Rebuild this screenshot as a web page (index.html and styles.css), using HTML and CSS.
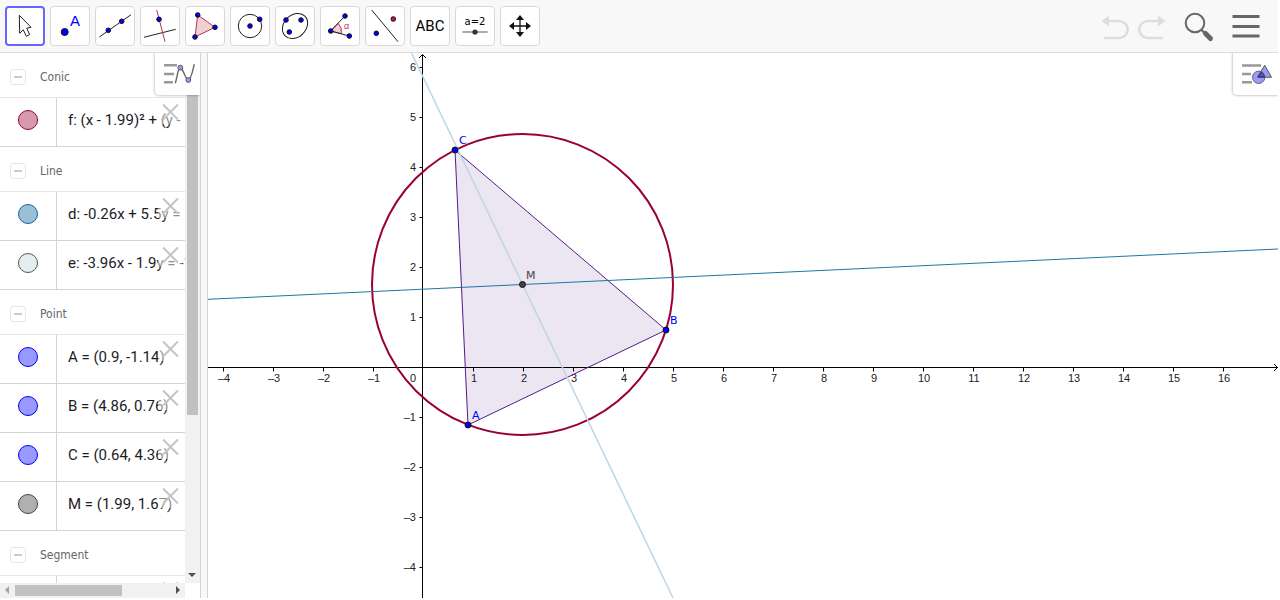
FILE: index.html
```
<!DOCTYPE html>
<html lang="en">
<head>
    <meta charset="UTF-8">
    <title>Geometry</title>
    <link rel="stylesheet" href="styles.css">
</head>
<body>
    <header class="toolbar">
        <div class="tools">
            <button class="tool selected" aria-label="Move">
                <svg viewBox="0 0 32 32"><path d="M10.3 5.3 L10.7 23.3 L14.3 19.8 L17.3 26.3 L20.7 24.6 L17.7 18.2 L22 17.3 Z" fill="#fff" stroke="#222"/></svg>
            </button>
            <button class="tool" aria-label="Point">
                <svg viewBox="0 0 32 32"><circle class="pt" cx="10.7" cy="22" r="3.5"/><text class="blue" x="16" y="16" font-size="15">A</text></svg>
            </button>
            <button class="tool" aria-label="Line">
                <svg viewBox="0 0 32 32"><path class="ln" d="M0.3 27 L32 4.7"/><circle class="pt" cx="9.3" cy="20.3" r="2.3"/><circle class="pt" cx="22.7" cy="11.3" r="2.3"/></svg>
            </button>
            <button class="tool" aria-label="Perpendicular line">
                <svg viewBox="0 0 32 32"><path class="ln" d="M0 27.3 L31.7 19.3"/><path class="red" d="M12.7 0 L21 31.7"/><circle class="pt" cx="15" cy="9.3" r="2.3"/></svg>
            </button>
            <button class="tool" aria-label="Polygon">
                <svg viewBox="0 0 32 32"><path class="red fill" d="M8.7 5 L26 17.3 L6 27 Z"/><circle class="pt" cx="8.7" cy="5" r="2.3"/><circle class="pt" cx="26" cy="17.3" r="2.3"/><circle class="pt" cx="6" cy="27" r="2.3"/></svg>
            </button>
            <button class="tool" aria-label="Circle">
                <svg viewBox="0 0 32 32"><circle class="ln" cx="16" cy="16" r="11.7"/><circle class="pt" cx="16" cy="16" r="2.3"/><circle class="pt" cx="25.7" cy="9.3" r="2.3"/></svg>
            </button>
            <button class="tool" aria-label="Ellipse">
                <svg viewBox="0 0 32 32"><ellipse class="ln" cx="16" cy="16" rx="14" ry="11" transform="rotate(-45 16 16)"/><circle class="pt" cx="7" cy="10" r="2.3"/><circle class="pt" cx="22" cy="10" r="2.3"/><circle class="pt" cx="10.3" cy="22" r="2.3"/></svg>
            </button>
            <button class="tool" aria-label="Angle">
                <svg viewBox="0 0 32 32"><path class="red fill" d="M6.7 21 L14 13.3 A11 11 0 0 1 17.3 23.7 Z"/><path class="ln" d="M21 6 L6.7 21 L25.3 26"/><circle class="pt" cx="6.7" cy="21" r="2.3"/><circle class="pt" cx="21" cy="6" r="2.3"/><circle class="pt" cx="25.3" cy="26" r="2.3"/><text class="alpha" x="20" y="19" font-size="9">α</text></svg>
            </button>
            <button class="tool" aria-label="Reflect">
                <svg viewBox="0 0 32 32"><path class="ln" d="M2.7 0 L29 31.7"/><circle class="pt redpt" cx="24.3" cy="9" r="2.3"/><circle class="pt" cx="7.3" cy="23.3" r="2.3"/></svg>
            </button>
            <button class="tool" aria-label="Text">
                <svg viewBox="0 0 32 32"><text class="abc" x="16" y="21" font-size="15">ABC</text></svg>
            </button>
            <button class="tool" aria-label="Slider">
                <svg viewBox="0 0 32 32"><text class="value" x="16" y="15" font-size="10">a=2</text><path d="M3.3 22 H28.7" stroke="#888" stroke-width="1.4"/><circle cx="16" cy="22" r="2.6" fill="#333"/></svg>
            </button>
            <button class="tool" aria-label="Move view">
                <svg viewBox="0 0 32 32"><path d="M16 8 V24 M8 16 H24" stroke="#111" stroke-width="1.3"/><path d="M16 5 L20 10 H12 Z M16 27 L20 22 H12 Z M5 16 L10 12 V20 Z M27 16 L22 12 V20 Z" fill="#111"/></svg>
            </button>
        </div>
        <div class="actions">
            <div class="history">
                <button class="action" aria-label="Undo" disabled>
                    <svg viewBox="0 0 32 32"><path d="M8 11 H19 C32 11 32 28 19 28 H5" fill="none" stroke="#ddd" stroke-width="2.6"/><path d="M2.5 11 L10 5.5 V16.5 Z" fill="#ddd"/></svg>
                </button>
                <button class="action" aria-label="Redo" disabled>
                    <svg viewBox="0 0 32 32"><path d="M24 11 H13 C0 11 0 28 13 28 H27" fill="none" stroke="#ddd" stroke-width="2.6"/><path d="M29.5 11 L22 5.5 V16.5 Z" fill="#ddd"/></svg>
                </button>
            </div>
            <button class="action" aria-label="Search">
                <svg viewBox="0 0 32 32"><circle cx="12" cy="13" r="9.3" fill="none" stroke="#666" stroke-width="2"/><path d="M18.3 19.7 L22 23.5" stroke="#666" stroke-width="2.2"/><path d="M22.5 23.5 L27.5 28.5" stroke="#666" stroke-width="5" stroke-linecap="round"/></svg>
            </button>
            <button class="action" aria-label="Menu">
                <svg viewBox="0 0 32 32"><path d="M2.5 6.5 H29.5 M2.5 16.5 H29.5 M2.5 26 H29.5" stroke="#666" stroke-width="3"/></svg>
            </button>
        </div>
    </header>

    <main class="views">
        <section class="algebra">
            <div class="objects">
                <h2 class="group"><button class="collapse" aria-label="Collapse"></button>Conic</h2>
                <div class="object">
                    <div class="marble"><span class="dot conic"></span></div>
                    <div class="formula">f: (x - 1.99)² + (y -</div>
                    <button class="remove" aria-label="Delete f"></button>
                </div>
                <h2 class="group"><button class="collapse" aria-label="Collapse"></button>Line</h2>
                <div class="object">
                    <div class="marble"><span class="dot line"></span></div>
                    <div class="formula">d: -0.26x + 5.5y =</div>
                    <button class="remove" aria-label="Delete d"></button>
                </div>
                <div class="object">
                    <div class="marble"><span class="dot pale"></span></div>
                    <div class="formula">e: -3.96x - 1.9y = -1</div>
                    <button class="remove" aria-label="Delete e"></button>
                </div>
                <h2 class="group"><button class="collapse" aria-label="Collapse"></button>Point</h2>
                <div class="object">
                    <div class="marble"><span class="dot point"></span></div>
                    <div class="formula">A = (0.9, -1.14)</div>
                    <button class="remove" aria-label="Delete A"></button>
                </div>
                <div class="object">
                    <div class="marble"><span class="dot point"></span></div>
                    <div class="formula">B = (4.86, 0.76)</div>
                    <button class="remove" aria-label="Delete B"></button>
                </div>
                <div class="object">
                    <div class="marble"><span class="dot point"></span></div>
                    <div class="formula">C = (0.64, 4.36)</div>
                    <button class="remove" aria-label="Delete C"></button>
                </div>
                <div class="object">
                    <div class="marble"><span class="dot center"></span></div>
                    <div class="formula">M = (1.99, 1.67)</div>
                    <button class="remove" aria-label="Delete M"></button>
                </div>
                <h2 class="group"><button class="collapse" aria-label="Collapse"></button>Segment</h2>
                <div class="object">
                    <div class="marble"></div>
                    <div class="formula"></div>
                    <button class="remove" aria-label="Delete segment"></button>
                </div>
            </div>
            <div class="vscroll">
                <div class="thumb"></div>
                <svg class="arrow" viewBox="0 0 15 15"><path d="M3 5 H11 L7 9 Z" fill="#505050"/></svg>
            </div>
            <div class="hscroll">
                <svg class="arrow" viewBox="0 0 15 15"><path d="M9 3 V11 L5 7 Z" fill="#a3a3a3"/></svg>
                <div class="thumb"></div>
                <svg class="arrow" viewBox="0 0 15 15"><path d="M6 3 V11 L10 7 Z" fill="#505050"/></svg>
            </div>
            <button class="stylebar" aria-label="Algebra style bar">
                <svg viewBox="0 0 32 24"><path class="bars" d="M2 3.3 H15 M2 12 H12 M2 20.3 H11"/><path d="M13.3 21.3 C15.5 14 16 5.7 18.3 5.7 C21 5.7 23.5 18 26.3 18 C29 18 30.5 9 32.3 2.3" fill="none" stroke="#666" stroke-width="1.4"/><circle class="knob" cx="18.3" cy="5.7" r="2.4"/><circle class="knob" cx="26.3" cy="18" r="2.4"/></svg>
            </button>
        </section>
        <div class="splitter"></div>
        <section class="graphics">
            <svg id="plane">
                <path d="M247 97 L458 277 L260 372 Z" fill="#ece5f2"/>
                <g id="axes"></g>
                <circle cx="314.5" cy="231.5" r="150.5" fill="none" stroke="#990033" stroke-width="2"/>
                <path d="M247 97 L458 277 L260 372 Z" fill="none" stroke="#551a8b"/>
                <path d="M203.5 0 L465 545" stroke="#bcd6e6" stroke-width="1.5"/>
                <path d="M0 246.3 L1070 196" stroke="#1f76a3"/>
                <circle class="pt" cx="247" cy="97" r="3"/>
                <circle class="pt" cx="458" cy="277" r="3"/>
                <circle class="pt" cx="260" cy="372" r="3"/>
                <circle cx="314.5" cy="231.5" r="3" fill="#444" stroke="#111"/>
                <text class="name" x="251" y="91">C</text>
                <text class="name" x="462" y="271">B</text>
                <text class="name" x="264" y="366">A</text>
                <text class="name dark" x="318" y="226">M</text>
            </svg>
            <button class="stylebar" aria-label="Graphics style bar">
                <svg viewBox="0 0 32 24"><path class="bars" d="M2 3.5 H21 M2 12 H11 M2 20.3 H12"/><circle cx="18.7" cy="15.3" r="6.2" fill="#9999ff" stroke="#666"/><path d="M24.7 3.2 L31.5 15.3 H17.5 Z" fill="#9999ff" stroke="#555"/><path d="M18 15 L21.5 9.8 Q24.5 12 24.6 15 Z" fill="#5b4be0" stroke="#333"/></svg>
            </button>
        </section>
    </main>

    <script>
        const plane = document.getElementById('plane');
        const unit = 50;
        const originX = 215;
        const originY = 314;

        function drawAxes() {
            const w = plane.clientWidth;
            const h = plane.clientHeight;
            const ax = originX - 0.5;
            const ay = originY + 0.5;
            let ticks = '';
            let labels = `<text class="tick" x="${originX - 10}" y="${originY + 15}">0</text>`;

            for (let n = Math.ceil((10 - originX) / unit); originX + n * unit < w - 10; n++) {
                if (n === 0) continue;
                const x = originX + n * unit + 0.5;
                ticks += `M${x} ${ay} v4 `;
                labels += `<text class="tick" x="${x + 0.5}" y="${originY + 15}">${label(n)}</text>`;
            }
            for (let n = Math.ceil((originY - h + 10) / unit); originY - n * unit > 10; n++) {
                if (n === 0) continue;
                const y = originY - n * unit + 0.5;
                ticks += `M${ax} ${y} h-3 `;
                labels += `<text class="tick end" x="${originX - 7}" y="${y + 3.5}">${label(n)}</text>`;
            }

            document.getElementById('axes').innerHTML = `
                <path class="axis" d="M0 ${ay} H${w} M${w - 4} ${ay - 3.5} L${w - 0.5} ${ay} L${w - 4} ${ay + 3.5}"/>
                <path class="axis" d="M${ax} 2 V${h} M${ax - 3.5} 5 L${ax} 1.5 L${ax + 3.5} 5"/>
                <path class="axis" d="${ticks}"/>${labels}`;
        }

        function label(n) {
            return n < 0 ? '–' + -n : n;
        }

        drawAxes();
        window.addEventListener('resize', drawAxes);
    </script>
</body>
</html>
```
FILE: styles.css
```
* {
    box-sizing: border-box;
}
body {
    display: flex;
    flex-direction: column;
    height: 100vh;
    margin: 0;
    padding: 0 2px 2px 0;
    overflow: hidden;
    background: #fff;
    font-family: "Noto Sans", sans-serif;
}
button {
    padding: 0;
    border: none;
    background: none;
    cursor: pointer;
}
svg {
    display: block;
    overflow: visible;
}

/* Toolbar */
.toolbar {
    display: flex;
    justify-content: space-between;
    align-items: center;
    height: 53px;
    padding: 0 14px 0 5px;
    border-bottom: 1px solid #dcdcdc;
    background: #f8f8f8;
}
.tools {
    display: flex;
    gap: 5px;
}
.tool {
    display: flex;
    align-items: center;
    justify-content: center;
    width: 40px;
    height: 40px;
    border: 1px solid #d8d8d8;
    border-radius: 4px;
    background: #fff;
}
.tool.selected {
    border: 2px solid #6666ff;
}
.tool svg,
.action svg {
    flex: none;
    width: 32px;
    height: 32px;
}
.actions {
    display: flex;
    gap: 11px;
}
.history {
    display: flex;
    gap: 1px;
}
.action {
    display: flex;
    align-items: center;
    justify-content: center;
    width: 36px;
    height: 40px;
}
.pt {
    fill: #0000ff;
    stroke: #111;
}
.redpt {
    fill: #cc1144;
}
.ln {
    fill: none;
    stroke: #222;
}
.red {
    fill: none;
    stroke: #bb3355;
}
.red.fill {
    fill: #f0d0d4;
}
.blue {
    fill: #0000ff;
}
.alpha {
    fill: #bb3355;
}
.abc {
    font-family: Roboto, sans-serif;
    text-anchor: middle;
}
.value {
    font-family: "DejaVu Sans", sans-serif;
    text-anchor: middle;
}

/* Views */
.views {
    display: flex;
    flex: 1;
    min-height: 0;
}
.algebra {
    position: relative;
    display: grid;
    grid-template-columns: 1fr 15px;
    grid-template-rows: 1fr 15px;
    width: 201px;
    border-right: 1px solid #d3d3d3;
}
.objects {
    min-width: 0;
    min-height: 0;
    overflow: hidden;
}
.group {
    display: flex;
    align-items: center;
    gap: 14px;
    height: 45px;
    margin: 0;
    padding: 4px 10px 0;
    border-bottom: 1px solid #e6e6e6;
    color: #666;
    font: 12px "DejaVu Sans Condensed", "DejaVu Sans", sans-serif;
}
.collapse {
    display: flex;
    align-items: center;
    justify-content: center;
    width: 16px;
    height: 16px;
    border: 1px solid #e6e6e6;
    border-radius: 3px;
}
.collapse::before {
    content: "";
    width: 8px;
    height: 2px;
    background: #ccc;
}
.object {
    position: relative;
    display: flex;
    height: 49px;
    border-bottom: 1px solid #d3d3d3;
}
.marble {
    display: flex;
    flex: none;
    align-items: center;
    justify-content: center;
    width: 57px;
    padding-bottom: 4px;
    border-right: 1px solid #d3d3d3;
}
.dot {
    width: 20px;
    height: 20px;
    border: 1px solid;
    border-radius: 50%;
}
.dot.conic {
    background: #d699ad;
    border-color: #990033;
}
.dot.line {
    background: #99c0d6;
    border-color: #1565a0;
}
.dot.pale {
    background: #e6edf0;
    border-color: #555;
}
.dot.point {
    background: #9999ff;
    border-color: #0000ff;
}
.dot.center {
    background: #b0b0b0;
    border-color: #444;
}
.formula {
    flex: 1;
    min-width: 0;
    padding-left: 11px;
    overflow: hidden;
    color: #1c1c1f;
    font-family: Roboto, sans-serif;
    font-size: 15px;
    line-height: 44px;
    white-space: nowrap;
}
.remove {
    position: absolute;
    top: 2px;
    right: 3px;
    width: 24px;
    height: 24px;
    background: rgba(255, 255, 255, 0.5);
}
.remove::before,
.remove::after {
    content: "";
    position: absolute;
    top: 11px;
    left: 2px;
    width: 21px;
    height: 2px;
    background: #c4c4c4;
    transform: rotate(45deg);
}
.remove::after {
    transform: rotate(-45deg);
}

/* Scrollbars */
.vscroll,
.hscroll {
    display: flex;
    justify-content: space-between;
    background: #f1f1f1;
}
.vscroll {
    flex-direction: column;
}
.vscroll .thumb {
    width: 11px;
    height: 362px;
    margin-left: 2px;
    background: #c1c1c1;
}
.hscroll {
    align-items: center;
}
.hscroll .thumb {
    width: 107px;
    height: 11px;
    margin-right: auto;
    background: #c1c1c1;
}
.arrow {
    width: 15px;
    height: 15px;
}

/* Style bar buttons */
.stylebar {
    position: absolute;
    top: 0;
    right: 0;
    display: flex;
    align-items: center;
    justify-content: center;
    width: 45px;
    height: 42px;
    border-radius: 0 0 0 4px;
    background: #fff;
    box-shadow: 0 0 3px rgba(0, 0, 0, 0.4);
    clip-path: inset(0 0 -4px -4px);
}
.stylebar svg {
    width: 32px;
    height: 24px;
}
.bars {
    stroke: #999;
    stroke-width: 2.4;
}
.knob {
    fill: #9999ff;
    stroke: #555;
}

/* Graphics */
.splitter {
    width: 7px;
    border-right: 1px solid #d3d3d3;
    background: #f8f8f8;
}
.graphics {
    position: relative;
    flex: 1;
    min-width: 0;
}
#plane {
    width: 100%;
    height: 100%;
    overflow: hidden;
}
.axis {
    fill: none;
    stroke: #000;
}
.tick {
    fill: #222;
    font: 11px "Liberation Sans", sans-serif;
    text-anchor: middle;
}
.tick.end {
    text-anchor: end;
}
.name {
    fill: #0000ff;
    font: 11px "DejaVu Sans", sans-serif;
}
.name.dark {
    fill: #444;
}
```
